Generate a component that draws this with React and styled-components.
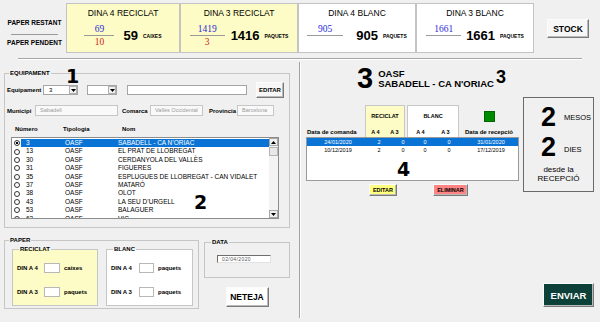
import React from 'react';
import styled, { createGlobalStyle } from 'styled-components';

const GlobalStyle = createGlobalStyle`
  * { box-sizing: border-box; }
  html, body { margin: 0; padding: 0; background: #f0f0f0; }
  body {
    width: 600px;
    height: 322px;
    overflow: hidden;
    font-family: "Liberation Sans", Arial, sans-serif;
    color: #000;
  }
`;

const stock = [
  { title: 'DINA 4 RECICLAT', top: '69', bottom: '10', total: '59', unit: 'CAIXES', tone: 'yellow', width: 114, line: 30, gap: 9 },
  { title: 'DINA 3 RECICLAT', top: '1419', bottom: '3', total: '1416', unit: 'PAQUETS', tone: 'yellow', width: 118, line: 35, gap: 6 },
  { title: 'DINA 4 BLANC', top: '905', bottom: '', total: '905', unit: 'PAQUETS', tone: 'white', width: 118, line: 36, gap: 13 },
  { title: 'DINA 3 BLANC', top: '1661', bottom: '', total: '1661', unit: 'PAQUETS', tone: 'white', width: 118, line: 35, gap: 5 },
];

const equips = [
  ['3', 'SABADELL - CA N\u2019ORIAC'],
  ['13', 'EL PRAT DE LLOBREGAT'],
  ['30', 'CERDANYOLA DEL VALL\u00c8S'],
  ['31', 'FIGUERES'],
  ['35', 'ESPLUGUES DE LLOBREGAT - CAN VIDALET'],
  ['37', 'MATAR\u00d3'],
  ['38', 'OLOT'],
  ['43', 'LA SEU D\u2019URGELL'],
  ['53', 'BALAGUER'],
  ['63', 'VIC'],
];

const orders = [
  ['24/01/2020', '2', '0', '0', '0', '31/01/2020'],
  ['10/12/2019', '2', '0', '0', '0', '17/12/2019'],
];

const YELLOW = '#fdfcc6';

const Arrow = ({ up }) => (
  <svg width="5" height="3" viewBox="0 0 5 3">
    <polygon points={up ? '0,3 5,3 2.5,0' : '0,0 5,0 2.5,3'} fill="#000" />
  </svg>
);

const App = () => {
  return (
    <>
      <GlobalStyle />
      <TopBar>
        <Side>
          <SideLabel>PAPER RESTANT</SideLabel>
          <SideLine />
          <SideLabel>PAPER PENDENT</SideLabel>
        </Side>
        {stock.map((s) => (
          <Card key={s.title} $w={s.width} $tone={s.tone}>
            <CardTitle>{s.title}</CardTitle>
            <CardBody>
              <Fraction $w={s.line}>
                <Num>{s.top}</Num>
                <Bar />
                <Den>{s.bottom}</Den>
              </Fraction>
              <Total $gap={s.gap}>{s.total}</Total>
              <Unit>{s.unit}</Unit>
            </CardBody>
          </Card>
        ))}
        <Button $w={42} $h={19} $fs={8.5} style={{ margin: '16px 0 0 13px' }}>STOCK</Button>
      </TopBar>
      <Rule />
      <Body>
        <LeftCol>
          <Mark $x={62} $y={7}>1</Mark>
          <Mark $x={190} $y={133}>2</Mark>
          <Frame $pad="0 2px 8px">
            <Legend>EQUIPAMENT</Legend>
            <FieldRow $h={16} $mt={5}>
              <FieldLabel $w={36}>Equipament</FieldLabel>
              <Combo $w={35}>
                <span>3</span>
                <DropBtn><Arrow /></DropBtn>
              </Combo>
              <Combo $w={30} $ml={9}>
                <span />
                <DropBtn><Arrow /></DropBtn>
              </Combo>
              <TextBox $w={120} $ml={10} />
              <Button $w={28} $h={16} $fs={6} style={{ marginLeft: 9 }}>EDITAR</Button>
            </FieldRow>
            <FieldRow $h={11} $mt={7}>
              <FieldLabel $w={28}>Municipi</FieldLabel>
              <ReadBox $w={83}>Sabadell</ReadBox>
              <FieldLabel $w={28} $ml={4}>Comarca</FieldLabel>
              <ReadBox $w={53}>Vallès Occidental</ReadBox>
              <FieldLabel $w={28} $ml={6}>Provincia</FieldLabel>
              <ReadBox $w={37}>Barcelona</ReadBox>
            </FieldRow>
            <HeadRow>
              <HeadCell $w={48}>Número</HeadCell>
              <HeadCell $w={59}>Tipologia</HeadCell>
              <HeadCell>Nom</HeadCell>
            </HeadRow>
            <ListBox>
              <ListRows>
                {equips.map(([n, name], i) => (
                  <EquipRow key={n}>
                    <RadioCell>
                      <Radio $on={i === 0} />
                    </RadioCell>
                    <EquipCells $sel={i === 0}>
                      <span>{n}</span>
                      <span>OASF</span>
                      <span>{name}</span>
                    </EquipCells>
                  </EquipRow>
                ))}
              </ListRows>
              <ScrollBar>
                <ScrollBtn><Arrow up /></ScrollBtn>
                <Thumb />
                <Track />
                <ScrollBtn><Arrow /></ScrollBtn>
              </ScrollBar>
            </ListBox>
          </Frame>
          <BottomRow>
            <Frame $w={195} $pad="0 2px 2px">
              <Legend>PAPER</Legend>
              <PaperInner>
                <Frame $w={86} $bg={YELLOW} $pad="0 4px 8px">
                  <Legend>RECICLAT</Legend>
                  <DinRow $mt={10}>
                    <DinLabel $w={27}>DIN A 4</DinLabel>
                    <DinInput $w={16} />
                    <DinUnit>caixes</DinUnit>
                  </DinRow>
                  <DinRow $mt={14}>
                    <DinLabel $w={27}>DIN A 3</DinLabel>
                    <DinInput $w={16} />
                    <DinUnit>paquets</DinUnit>
                  </DinRow>
                </Frame>
                <Frame $w={87} $bg="#fff" $pad="0 4px 8px">
                  <Legend>BLANC</Legend>
                  <DinRow $mt={10}>
                    <DinLabel $w={28}>DIN A 4</DinLabel>
                    <DinInput $w={15} />
                    <DinUnit>paquets</DinUnit>
                  </DinRow>
                  <DinRow $mt={14}>
                    <DinLabel $w={28}>DIN A 3</DinLabel>
                    <DinInput $w={15} />
                    <DinUnit>paquets</DinUnit>
                  </DinRow>
                </Frame>
              </PaperInner>
            </Frame>
            <DateCol>
              <Frame $w={86} $pad="0 4px 14px">
                <Legend>DATA</Legend>
                <DateInput>02/04/2020</DateInput>
              </Frame>
              <Button $w={43} $h={20} $fs={8.5} $bg="#fff" style={{ marginTop: 9 }}>NETEJA</Button>
            </DateCol>
          </BottomRow>
        </LeftCol>
        <Divider />
        <RightCol>
          <Mark $x={97} $y={100}>4</Mark>
          <TitleRow>
            <BigNum>3</BigNum>
            <TitleText>
              <div>OASF</div>
              <div>SABADELL - CA N'ORIAC</div>
            </TitleText>
            <SmallNum>3</SmallNum>
          </TitleRow>
          <MiddleRow>
            <TableSection>
              <TableHead>
                <CmdLabel>Data de comanda</CmdLabel>
                <HeadBox $w={40} $bg={YELLOW}>
                  <HeadTitle>RECICLAT</HeadTitle>
                  <SubCols><span>A 4</span><span>A 3</span></SubCols>
                </HeadBox>
                <HeadBox $w={52} $bg="#fff" style={{ marginLeft: 2 }}>
                  <HeadTitle>BLANC</HeadTitle>
                  <SubCols><span>A 4</span><span>A 3</span></SubCols>
                </HeadBox>
                <RecCol>
                  <GreenDot />
                  <RecLabel>Data de recepció</RecLabel>
                </RecCol>
              </TableHead>
              <OrderList>
                {orders.map((o, i) => (
                  <OrderRow key={o[0]} $sel={i === 0}>
                    {o.map((c, j) => <span key={j}>{c}</span>)}
                  </OrderRow>
                ))}
              </OrderList>
              <ActionRow>
                <Button $w={28} $h={12} $fs={5.5} $bg="#ffff80" style={{ marginLeft: 63 }}>EDITAR</Button>
                <Button $w={35} $h={12} $fs={5.5} $bg="#ff8484" style={{ marginLeft: 36 }}>ELIMINAR</Button>
              </ActionRow>
            </TableSection>
            <SinceBox>
              <CountRow>
                <CountNum>2</CountNum>
                <CountWord>MESOS</CountWord>
              </CountRow>
              <CountRow style={{ marginTop: 3 }}>
                <CountNum>2</CountNum>
                <CountWord $drop={3}>DIES</CountWord>
              </CountRow>
              <SinceText>desde la<br />RECEPCIÓ</SinceText>
            </SinceBox>
          </MiddleRow>
          <Button $w={51} $h={24} $fs={9.5} $bg="#0c4038" $fg="#fff" style={{ marginTop: 'auto', alignSelf: 'flex-end', marginRight: 6 }}>
            ENVIAR
          </Button>
        </RightCol>
      </Body>
    </>
  );
};

/* ---------- top stock bar ---------- */

const TopBar = styled.header`
  display: flex;
  align-items: flex-start;
  padding-top: 3px;
  height: 53px;
`;

const Side = styled.div`
  width: 55px;
  margin: 16px 4px 0 7px;
  display: flex;
  flex-direction: column;
  align-items: center;
`;

const SideLabel = styled.div`
  font-size: 6.5px;
  font-weight: 700;
  line-height: 8px;
  white-space: nowrap;
`;

const SideLine = styled.div`
  width: 47px;
  height: 1px;
  background: #9a9a9a;
  margin: 7px 0 4px;
`;

const Card = styled.div`
  width: ${(p) => p.$w}px;
  height: 50px;
  background: ${(p) => (p.$tone === 'yellow' ? YELLOW : '#fff')};
  border: 1px solid #c4c4c4;
  display: flex;
  flex-direction: column;
  align-items: center;
`;

const CardTitle = styled.div`
  margin-top: 4px;
  font-size: 8.5px;
  line-height: 10px;
  white-space: nowrap;
`;

const CardBody = styled.div`
  display: flex;
  align-items: center;
  margin-top: 6px;
`;

const Fraction = styled.div`
  width: ${(p) => p.$w}px;
  display: flex;
  flex-direction: column;
  align-items: center;
  font-family: "Liberation Serif", "Times New Roman", serif;
  font-size: 9.5px;
  line-height: 10px;
`;

const Num = styled.div`
  color: #2b2bd8;
  margin-bottom: 1px;
`;

const Bar = styled.div`
  width: 100%;
  height: 1px;
  background: #9a9a9a;
`;

const Den = styled.div`
  color: #d21c1c;
  margin-top: 1px;
  height: 10px;
`;

const Total = styled.div`
  margin-left: ${(p) => p.$gap}px;
  font-size: 13px;
  font-weight: 700;
  line-height: 14px;
`;

const Unit = styled.div`
  margin-left: 5px;
  font-size: 5px;
  font-weight: 700;
  line-height: 6px;
`;

const Rule = styled.div`
  margin: 5px 0 0 18px;
  width: 564px;
  height: 2px;
  border-top: 1px solid #a6a6a6;
  border-bottom: 1px solid #fff;
`;

/* ---------- body ---------- */

const Body = styled.main`
  display: flex;
  height: 262px;
`;

const LeftCol = styled.section`
  position: relative;
  width: 286px;
  margin-left: 4px;
  padding-top: 9px;
  display: flex;
  flex-direction: column;
`;

const Divider = styled.div`
  width: 1px;
  margin: 2px 0 4px 9px;
  background: #a0a0a0;
  box-shadow: 1px 0 0 #fff;
`;

const RightCol = styled.section`
  position: relative;
  flex: 1;
  padding: 4px 0 15px;
  display: flex;
  flex-direction: column;
`;

const Mark = styled.span`
  position: absolute;
  left: ${(p) => p.$x}px;
  top: ${(p) => p.$y}px;
  font-family: "DejaVu Sans", sans-serif;
  font-weight: 700;
  font-size: 19px;
  line-height: 19px;
  z-index: 2;
`;

const Frame = styled.fieldset`
  margin: 0;
  min-width: 0;
  width: ${(p) => (p.$w ? `${p.$w}px` : 'auto')};
  padding: ${(p) => p.$pad};
  border: 1px solid #c6c6c6;
  background: ${(p) => p.$bg || 'transparent'};
`;

const Legend = styled.legend`
  margin-left: 2px;
  padding: 0 1px;
  font-size: 6px;
  font-weight: 700;
  line-height: 8px;
`;

const FieldRow = styled.div`
  display: flex;
  align-items: center;
  height: ${(p) => p.$h}px;
  margin-top: ${(p) => p.$mt}px;
`;

const FieldLabel = styled.div`
  width: ${(p) => p.$w}px;
  margin-left: ${(p) => p.$ml || 0}px;
  font-size: 6px;
  font-weight: 700;
  white-space: nowrap;
`;

const Combo = styled.div`
  width: ${(p) => p.$w}px;
  margin-left: ${(p) => p.$ml || 0}px;
  height: 10px;
  background: #fff;
  border: 1px solid #a5a5a5;
  display: flex;
  align-items: center;
  justify-content: space-between;
  padding-left: 5px;
  font-size: 6px;
`;

const DropBtn = styled.div`
  width: 8px;
  height: 8px;
  border: 1px solid #b0b0b0;
  background: #f2f2f2;
  display: flex;
  align-items: center;
  justify-content: center;
`;

const TextBox = styled.div`
  width: ${(p) => p.$w}px;
  margin-left: ${(p) => p.$ml}px;
  height: 10px;
  background: #fff;
  border: 1px solid #a5a5a5;
`;

const ReadBox = styled.div`
  width: ${(p) => p.$w}px;
  height: 11px;
  background: #f9f9f9;
  border: 1px solid #c6c6c6;
  padding-left: 4px;
  font-size: 5.6px;
  line-height: 9px;
  color: #9c9c9c;
  white-space: nowrap;
  overflow: hidden;
`;

const HeadRow = styled.div`
  display: flex;
  margin: 9px 0 0 8px;
  height: 8px;
  line-height: 8px;
`;

const HeadCell = styled.div`
  width: ${(p) => (p.$w ? `${p.$w}px` : 'auto')};
  font-size: 6px;
  font-weight: 700;
`;

const ListBox = styled.div`
  display: flex;
  width: 268px;
  height: 82px;
  margin: 4px 0 0 4px;
  background: #fff;
  border: 1px solid #8c8c8c;
`;

const ListRows = styled.div`
  flex: 1;
  padding-top: 1px;
  overflow: hidden;
`;

const EquipRow = styled.div`
  display: flex;
  height: 8.4px;
  align-items: stretch;
`;

const RadioCell = styled.div`
  width: 9px;
  display: flex;
  align-items: center;
  padding-left: 2px;
`;

const Radio = styled.div`
  width: 6px;
  height: 6px;
  border-radius: 50%;
  border: 1px solid #333;
  background: ${(p) => (p.$on ? 'radial-gradient(circle, #000 0 1.3px, #fff 1.5px)' : '#fff')};
`;

const EquipCells = styled.div`
  flex: 1;
  display: grid;
  grid-template-columns: 39px 53px 1fr;
  align-items: center;
  padding-left: 5px;
  font-size: 6.5px;
  line-height: 8.4px;
  white-space: nowrap;
  background: ${(p) => (p.$sel ? '#0a74d6' : 'transparent')};
  color: ${(p) => (p.$sel ? '#fff' : '#000')};
`;

const ScrollBar = styled.div`
  width: 9px;
  display: flex;
  flex-direction: column;
  background: #f3f3f3;
`;

const ScrollBtn = styled.div`
  height: 8px;
  border: 1px solid #a8a8a8;
  background: #f0f0f0;
  display: flex;
  align-items: center;
  justify-content: center;
`;

const Thumb = styled.div`
  height: 9px;
  margin-top: 1px;
  border: 1px solid #b5b5b5;
  background: #e8e8e8;
`;

const Track = styled.div`
  flex: 1;
`;

const BottomRow = styled.div`
  display: flex;
  align-items: flex-start;
  margin-top: 8px;
  gap: 5px;
`;

const PaperInner = styled.div`
  display: flex;
  gap: 8px;
  margin: 1px 0 0 5px;
`;

const DinRow = styled.div`
  display: flex;
  align-items: center;
  height: 10px;
  margin-top: ${(p) => p.$mt}px;
`;

const DinLabel = styled.div`
  width: ${(p) => p.$w}px;
  font-size: 6px;
  font-weight: 700;
  white-space: nowrap;
`;

const DinInput = styled.div`
  width: ${(p) => p.$w}px;
  height: 10px;
  background: #fff;
  border: 1px solid #b8b8b8;
`;

const DinUnit = styled.div`
  margin-left: 4px;
  font-size: 6px;
  font-weight: 700;
`;

const DateCol = styled.div`
  width: 86px;
  margin-top: 2px;
  display: flex;
  flex-direction: column;
  align-items: center;
`;

const DateInput = styled.div`
  width: 54px;
  height: 8px;
  margin: 9px 0 0 8px;
  background: #fff;
  border: 1px solid;
  border-color: #6e6e6e #e2e2e2 #e2e2e2 #6e6e6e;
  padding-left: 4px;
  font-size: 5px;
  line-height: 6px;
  letter-spacing: 0.4px;
  color: #555;
  overflow: hidden;
`;

const Button = styled.button`
  width: ${(p) => p.$w}px;
  height: ${(p) => p.$h}px;
  padding: 0;
  font-family: inherit;
  font-size: ${(p) => p.$fs}px;
  font-weight: 700;
  background: ${(p) => p.$bg || '#f7f7f7'};
  color: ${(p) => p.$fg || '#000'};
  border: 1px solid;
  border-color: #fcfcfc #7a7a7a #7a7a7a #fcfcfc;
  box-shadow: inset -1px -1px 0 #b9b9b9;
  white-space: nowrap;
  cursor: pointer;
`;

/* ---------- right side ---------- */

const TitleRow = styled.div`
  display: flex;
  align-items: center;
  height: 29px;
  margin-left: 57px;
`;

const BigNum = styled.div`
  font-size: 29px;
  font-weight: 700;
  line-height: 29px;
`;

const TitleText = styled.div`
  margin-left: 5px;
  font-size: 9.5px;
  font-weight: 700;
  line-height: 10px;
  white-space: nowrap;
`;

const SmallNum = styled.div`
  align-self: flex-start;
  margin: 4px 0 0 2px;
  font-size: 18px;
  font-weight: 700;
  line-height: 18px;
`;

const MiddleRow = styled.div`
  display: flex;
  align-items: flex-start;
  margin-top: 4px;
`;

const TableSection = styled.div`
  width: 213px;
  margin-left: 6px;
  padding-top: 8px;
`;

const TableHead = styled.div`
  display: flex;
  align-items: flex-end;
  height: 32px;
`;

const CmdLabel = styled.div`
  width: 59px;
  padding-left: 1px;
  margin-bottom: 1px;
  font-size: 6px;
  font-weight: 700;
  line-height: 8px;
  white-space: nowrap;
`;

const RecLabel = styled.div`
  font-size: 6px;
  font-weight: 700;
  line-height: 8px;
  white-space: nowrap;
`;

const HeadBox = styled.div`
  width: ${(p) => p.$w}px;
  height: 32px;
  background: ${(p) => p.$bg};
  border: 1px solid #c8c8c8;
  border-bottom: none;
  display: flex;
  flex-direction: column;
  align-items: center;
`;

const HeadTitle = styled.div`
  margin-top: 6px;
  font-size: 5.5px;
  font-weight: 700;
  line-height: 8px;
`;

const SubCols = styled.div`
  margin-top: auto;
  width: 100%;
  display: flex;
  justify-content: space-around;
  margin-bottom: 1px;
  font-size: 5.5px;
  font-weight: 700;
  line-height: 8px;
`;

const RecCol = styled.div`
  width: 52px;
  margin: 0 0 1px 4px;
  display: flex;
  flex-direction: column;
  align-items: center;
`;

const GreenDot = styled.div`
  width: 11px;
  height: 11px;
  margin-bottom: 6px;
  background: #008a00;
  border: 1px solid #006400;
`;

const OrderList = styled.div`
  height: 44px;
  background: #fff;
  border: 1px solid #9a9a9a;
`;

const OrderRow = styled.div`
  display: grid;
  grid-template-columns: 62px 20px 28px 16px 32px 52px;
  height: 8px;
  line-height: 8px;
  font-size: 5.5px;
  text-align: center;
  background: ${(p) => (p.$sel ? '#0a74d6' : 'transparent')};
  color: ${(p) => (p.$sel ? '#fff' : '#000')};
`;

const ActionRow = styled.div`
  display: flex;
  margin-top: 3px;
`;

const SinceBox = styled.div`
  width: 71px;
  height: 95px;
  margin-left: 4px;
  border: 1px solid #6a6a6a;
  padding-top: 6px;
  display: flex;
  flex-direction: column;
`;

const CountRow = styled.div`
  display: flex;
  align-items: center;
  padding-left: 17px;
`;

const CountNum = styled.div`
  font-size: 27px;
  font-weight: 700;
  line-height: 27px;
`;

const CountWord = styled.div`
  margin: ${(p) => p.$drop || 0}px 0 0 8px;
  font-size: 7.5px;
`;

const SinceText = styled.div`
  margin-top: 4px;
  text-align: center;
  font-size: 8px;
  line-height: 9px;
`;

export default App;
